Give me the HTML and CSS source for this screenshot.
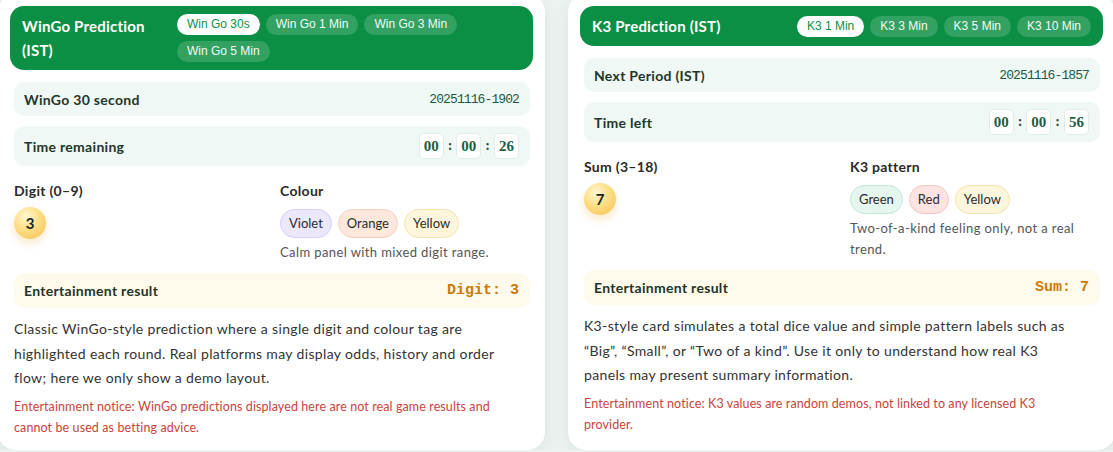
FILE: index.html
```html
<!DOCTYPE html>
<html lang="en">
<head>
<meta charset="utf-8">
<title>Predictions</title>
<link rel="stylesheet" href="styles.css">
</head>
<body>
<div class="board">
  <section class="card">
    <header class="card-head">
      <h2 class="card-title">WinGo Prediction (IST)</h2>
      <div class="tabs">
        <span class="tab active">Win Go 30s</span>
        <span class="tab">Win Go 1 Min</span>
        <span class="tab">Win Go 3 Min</span>
        <span class="tab">Win Go 5 Min</span>
      </div>
    </header>
    <div class="row mint period">
      <span class="row-label">WinGo 30 second</span>
      <span class="period-no">20251116-1902</span>
    </div>
    <div class="row mint timer-row">
      <span class="row-label">Time remaining</span>
      <div class="timer"><span class="tbox">00</span><span class="colon">:</span><span class="tbox">00</span><span class="colon">:</span><span class="tbox">26</span></div>
    </div>
    <div class="cols">
      <div class="col">
        <div class="col-label">Digit (0–9)</div>
        <div class="ball">3</div>
      </div>
      <div class="col">
        <div class="col-label">Colour</div>
        <div class="chips">
          <span class="chip violet">Violet</span>
          <span class="chip orange">Orange</span>
          <span class="chip yellow">Yellow</span>
        </div>
        <p class="hint">Calm panel with mixed digit range.</p>
      </div>
    </div>
    <div class="row cream result">
      <span class="row-label">Entertainment result</span>
      <span class="result-val">Digit: 3</span>
    </div>
    <p class="desc">Classic WinGo-style prediction where a single digit and colour tag are highlighted each round. Real platforms may display odds, history and order flow; here we only show a demo layout.</p>
    <p class="notice">Entertainment notice: WinGo predictions displayed here are not real game results and cannot be used as betting advice.</p>
  </section>

  <section class="card">
    <header class="card-head">
      <h2 class="card-title">K3 Prediction (IST)</h2>
      <div class="tabs">
        <span class="tab active">K3 1 Min</span>
        <span class="tab">K3 3 Min</span>
        <span class="tab">K3 5 Min</span>
        <span class="tab">K3 10 Min</span>
      </div>
    </header>
    <div class="row mint period">
      <span class="row-label">Next Period (IST)</span>
      <span class="period-no">20251116-1857</span>
    </div>
    <div class="row mint timer-row">
      <span class="row-label">Time left</span>
      <div class="timer"><span class="tbox">00</span><span class="colon">:</span><span class="tbox">00</span><span class="colon">:</span><span class="tbox">56</span></div>
    </div>
    <div class="cols">
      <div class="col">
        <div class="col-label">Sum (3–18)</div>
        <div class="ball">7</div>
      </div>
      <div class="col">
        <div class="col-label">K3 pattern</div>
        <div class="chips">
          <span class="chip green">Green</span>
          <span class="chip red">Red</span>
          <span class="chip yellow">Yellow</span>
        </div>
        <p class="hint">Two-of-a-kind feeling only, not a real trend.</p>
      </div>
    </div>
    <div class="row cream result">
      <span class="row-label">Entertainment result</span>
      <span class="result-val">Sum: 7</span>
    </div>
    <p class="desc">K3-style card simulates a total dice value and simple pattern labels such as “Big”, “Small”, or “Two of a kind”. Use it only to understand how real K3 panels may present summary information.</p>
    <p class="notice">Entertainment notice: K3 values are random demos, not linked to any licensed K3 provider.</p>
  </section>
</div>
</body>
</html>
```

FILE: styles.css
```css
* { box-sizing: border-box; }
html, body { margin: 0; padding: 0; }
body {
  background: #edf3f1;
  font-family: Lato, "Noto Sans", sans-serif;
  color: #2d2d2d;
  overflow: hidden;
}
.board {
  display: grid;
  grid-template-columns: 547px 547px;
  gap: 23px;
  margin: -6px 0 0 -2px;
}
.card {
  background: #fff;
  border-radius: 18px;
  padding: 12px 15px 12px 16px;
  box-shadow: 0 4px 18px rgba(30, 70, 55, 0.08);
}
.card-head {
  display: flex;
  align-items: center;
  justify-content: space-between;
  gap: 12px;
  margin: 0 -3px 0 -4px;
  padding: 8px 12px;
  background: #0b8f45;
  border-radius: 14px;
  color: #fff;
}
.card-title {
  flex: 1;
  margin: 0;
  font-size: 15px;
  font-weight: 700;
  line-height: 24px;
  letter-spacing: 0.2px;
}
.tabs {
  display: flex;
  flex-wrap: wrap;
  gap: 6px;
  max-width: 344px;
}
.tab {
  height: 21px;
  line-height: 21px;
  padding: 0 10px;
  border-radius: 11px;
  background: rgba(255, 255, 255, 0.16);
  font-family: "Liberation Sans", Arial, sans-serif;
  font-size: 12px;
  color: #f2fbf5;
  white-space: nowrap;
}
.tab.active {
  background: #fff;
  color: #0b8f45;
}
.row {
  display: flex;
  align-items: center;
  justify-content: space-between;
  padding: 0 11px 0 10px;
  border-radius: 10px;
}
.mint { background: #eff8f4; }
.cream { background: #fffaeb; }
.period { height: 34px; margin-top: 12px; }
.timer-row { height: 40px; margin-top: 10px; }
.row-label {
  font-size: 14px;
  font-weight: 700;
  letter-spacing: 0.3px;
  color: #23352c;
}
.period-no {
  font-family: "Liberation Mono", monospace;
  font-size: 13px;
  letter-spacing: -0.9px;
  color: #1e5a44;
}
.timer {
  display: flex;
  align-items: center;
  gap: 4px;
}
.tbox {
  width: 25px;
  height: 26px;
  display: flex;
  align-items: center;
  justify-content: center;
  background: #fff;
  border: 1px solid #e1ece7;
  border-radius: 5px;
  font-family: "Liberation Serif", serif;
  font-weight: 700;
  font-size: 15px;
  color: #1b5e45;
}
.colon {
  font-family: "Liberation Serif", serif;
  font-weight: 700;
  font-size: 14px;
  color: #2b4a3c;
}
.cols {
  display: grid;
  grid-template-columns: 1fr 1fr;
  gap: 16px;
  margin-top: 16px;
}
.col-label {
  font-size: 14px;
  font-weight: 700;
  line-height: 18px;
  letter-spacing: 0.3px;
  color: #2a2a2a;
}
.ball {
  width: 32px;
  height: 32px;
  margin-top: 7px;
  border-radius: 50%;
  display: flex;
  align-items: center;
  justify-content: center;
  background: radial-gradient(circle at 38% 30%, #fff6d2 0%, #fde08a 40%, #f6c04e 100%);
  box-shadow: 0 4px 8px rgba(230, 170, 50, 0.28);
  font-size: 15px;
  font-weight: 700;
  color: #222;
}
.chips {
  display: flex;
  gap: 6px;
  margin-top: 9px;
}
.chip {
  height: 29px;
  line-height: 27px;
  padding: 0 8px;
  border: 1px solid;
  border-radius: 15px;
  font-size: 13px;
  color: #2b2b2b;
}
.violet { background: #ede7fc; border-color: #d9cdf6; }
.orange { background: #fde8de; border-color: #f6cfbc; }
.yellow { background: #fdf6dc; border-color: #f3e4ac; }
.green { background: #e4f6ed; border-color: #c1e8d3; }
.red { background: #fde4e2; border-color: #f4c4c0; }
.hint {
  margin: 4px 0 0;
  font-size: 13px;
  line-height: 21px;
  letter-spacing: 0.4px;
  color: #555;
}
.result {
  height: 35px;
  margin-top: 10px;
}
.result-val {
  font-family: "Liberation Mono", monospace;
  font-weight: 700;
  font-size: 15px;
  color: #c97a0b;
}
.desc {
  max-width: 486px;
  margin: 9px 0 0;
  font-size: 14px;
  line-height: 24.5px;
  letter-spacing: 0.35px;
  color: #333;
}
.notice {
  max-width: 486px;
  margin: 5px 0 0;
  font-size: 12.5px;
  line-height: 21px;
  letter-spacing: 0.1px;
  color: #c8443c;
}
```
